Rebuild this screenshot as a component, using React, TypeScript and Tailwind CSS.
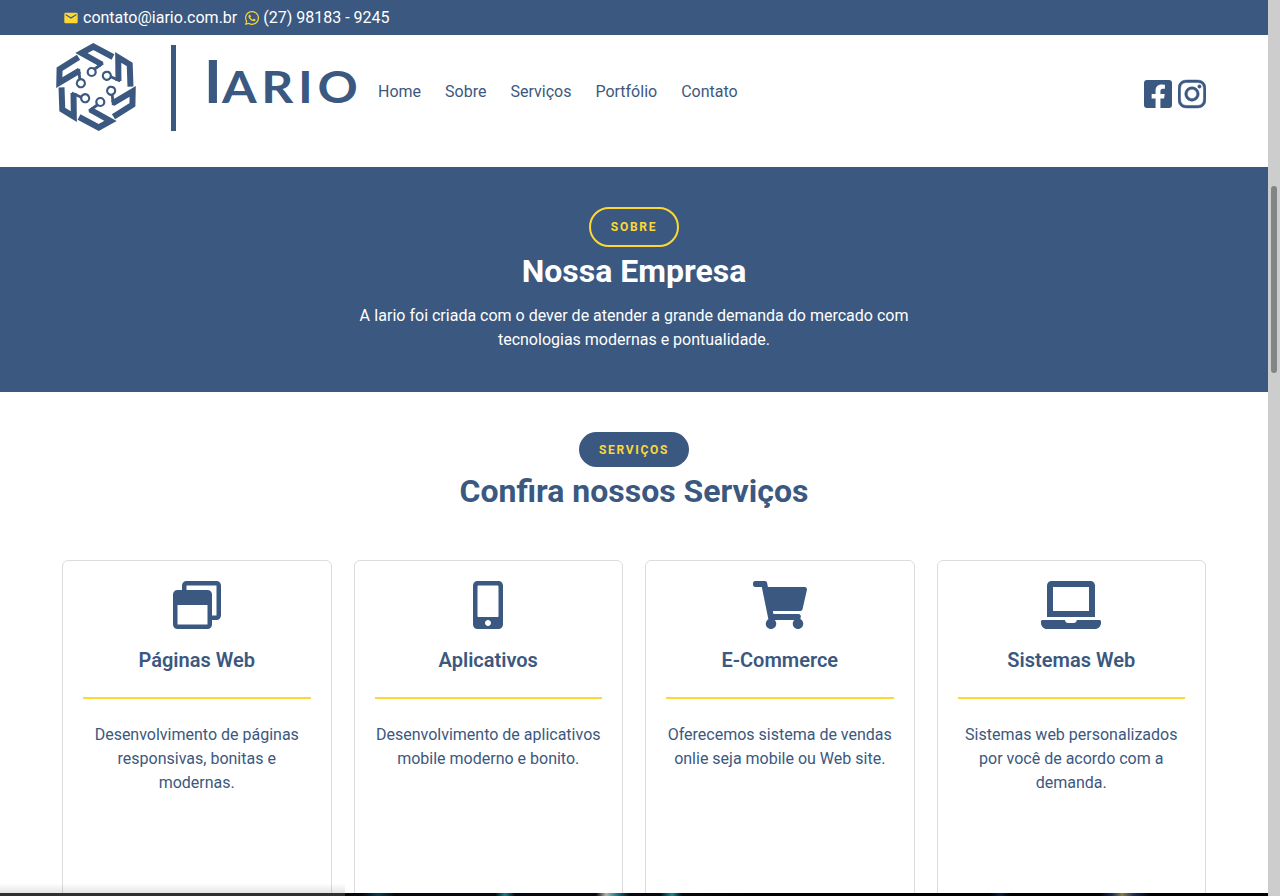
import { FaFacebookSquare, FaInstagram, FaLaptop, FaMobileAlt, FaRegWindowRestore, FaShoppingCart, FaWhatsapp } from "react-icons/fa";
import { MdEmail } from "react-icons/md";

const services = [
  {
    icon: <FaRegWindowRestore className="h-12 w-12 shrink-0" />,
    title: "Páginas Web",
    text: "Desenvolvimento de páginas responsivas, bonitas e modernas.",
  },
  {
    icon: <FaMobileAlt className="h-12 w-[30px] shrink-0" />,
    title: "Aplicativos",
    text: "Desenvolvimento de aplicativos mobile moderno e bonito.",
  },
  {
    icon: <FaShoppingCart className="h-12 w-[54px] shrink-0" />,
    title: "E-Commerce",
    text: "Oferecemos sistema de vendas onlie seja mobile ou Web site.",
  },
  {
    icon: <FaLaptop className="h-12 w-[60px] shrink-0" />,
    title: "Sistemas Web",
    text: "Sistemas web personalizados por você de acordo com a demanda.",
  },
];

const LogoMark = () => (
  <svg width="80" height="86" viewBox="-40 -43 80 86" className="shrink-0 overflow-visible">
    {[0, 60, 120, 180, 240, 300].map((angle) => (
      <g key={angle} transform={`rotate(${angle})`}>
        <path
          d="M17 -30 L-2.7 -40.5 L-14.5 -34 L6 -22.5"
          fill="none"
          stroke="#3b5880"
          strokeWidth="6"
        />
        <path d="M7 -24 L-2 -17.5" fill="none" stroke="#3b5880" strokeWidth="2.8" />
        <circle cx="-4.3" cy="-15" r="4" fill="#fff" stroke="#3b5880" strokeWidth="2.2" />
      </g>
    ))}
  </svg>
);

const Logo = () => (
  <div className="flex items-start">
    <div className="mt-[9px]">
      <LogoMark />
    </div>
    <div className="ml-[35px] mt-[10px] h-[86px] w-[5px] bg-[#3b5880]" />
    <div className="ml-[28px] mt-[15px] flex w-[152px] items-baseline font-['Lato',sans-serif] font-bold text-[#3b5880]">
      <span className="text-[60px] leading-[60px]">I</span>
      <span className="origin-left scale-x-[1.16] text-[43px] leading-[60px] tracking-[4px]">ARIO</span>
    </div>
  </div>
);

const Badge = ({ label, outline }: { label: string; outline?: boolean }) => (
  <div
    className={
      outline
        ? "flex h-10 w-[90px] shrink-0 items-center justify-center rounded-full border-2 border-[#fdd835] text-xs font-bold tracking-[1.7px] text-[#fdd835]"
        : "flex h-[35px] w-[110px] shrink-0 items-center justify-center rounded-full bg-[#3b5880] text-xs font-bold tracking-[1.7px] text-[#fdd835]"
    }
  >
    {label}
  </div>
);

export default function App() {
  return (
    <div className="flex h-[896px] overflow-hidden bg-white font-['Roboto',sans-serif] text-[#3b5880]">
      <div className="relative flex min-w-0 flex-1 flex-col">
        <div className="flex h-[35px] shrink-0 items-center bg-[#3b5880] pl-[63px] pt-px text-white">
          <MdEmail size={16} className="text-[#fdd835]" />
          <span className="ml-1">contato@iario.com.br</span>
          <FaWhatsapp className="ml-2 h-4 w-[14px] text-[#fdd835]" />
          <span className="ml-1">(27) 98183 - 9245</span>
        </div>

        <header className="flex h-[132px] shrink-0 items-start pl-[56px] pr-[62px]">
          <Logo />
          <nav className="ml-[22px] mt-[44px] flex gap-6 pt-px leading-6">
            <a>Home</a>
            <a>Sobre</a>
            <a>Serviços</a>
            <a>Portfólio</a>
            <a>Contato</a>
          </nav>
          <div className="ml-auto mt-[43px] flex gap-[6px]">
            <FaFacebookSquare className="h-8 w-7" />
            <FaInstagram className="h-8 w-7 stroke-[8]" />
          </div>
        </header>

        <section className="flex h-[225px] shrink-0 flex-col items-center bg-[#3b5880] pt-10 text-white">
          <Badge label="SOBRE" outline />
          <h1 className="mt-[6px] text-[32px] leading-[36px] font-bold">Nossa Empresa</h1>
          <p className="mt-[15px] w-[600px] text-center leading-6">
            A Iario foi criada com o dever de atender a grande demanda do mercado com tecnologias modernas e pontualidade.
          </p>
        </section>

        <section className="flex min-h-0 flex-1 flex-col items-center pt-10">
          <Badge label="SERVIÇOS" />
          <h2 className="mt-[6px] text-[32px] leading-[36px] font-bold">Confira nossos Serviços</h2>
          <div className="mt-[51px] grid w-full grid-cols-4 gap-[22px] px-[62px]">
            {services.map((service) => (
              <div
                key={service.title}
                className="flex h-[400px] flex-col items-center rounded-md border border-[#dcdcdc] px-5 pt-5 text-center"
              >
                {service.icon}
                <h3 className="mt-[18px] text-xl leading-[26px] font-semibold">{service.title}</h3>
                <div className="mt-6 h-[2px] w-full shrink-0 bg-[#fdd835]" />
                <p className="mt-6 leading-6">{service.text}</p>
              </div>
            ))}
          </div>
        </section>

        {/* edge of the next section's background peeking in at the fold */}
        <div className="absolute bottom-[3px] left-0 h-[10px] w-[345px] bg-gradient-to-t from-black/10 to-transparent" />
        <div className="absolute inset-x-0 bottom-0 h-[3px] bg-[linear-gradient(90deg,#2f2f2f_345px,#05080c_345px,#05080c_362px,#0a3a50_378px,#05080c_395px,#05080c_495px,#1a7a90_505px,#05080c_515px,#05080c_596px,#b0b8a8_606px,#1a6a80_618px,#05080c_630px,#05080c_660px,#1a8a8a_672px,#05080c_682px,#000_760px,#000_990px,#101c3c_1000px,#000_1010px,#000_1100px,#1c2a50_1112px,#8a7a40_1122px,#1c2a50_1134px,#000_1150px)]" />
      </div>

      <div className="w-3 shrink-0 bg-[#cdcdcd] pt-[186px]">
        <div className="mx-auto h-[187px] w-[6px] rounded-full bg-[#808585]" />
      </div>
    </div>
  );
}
